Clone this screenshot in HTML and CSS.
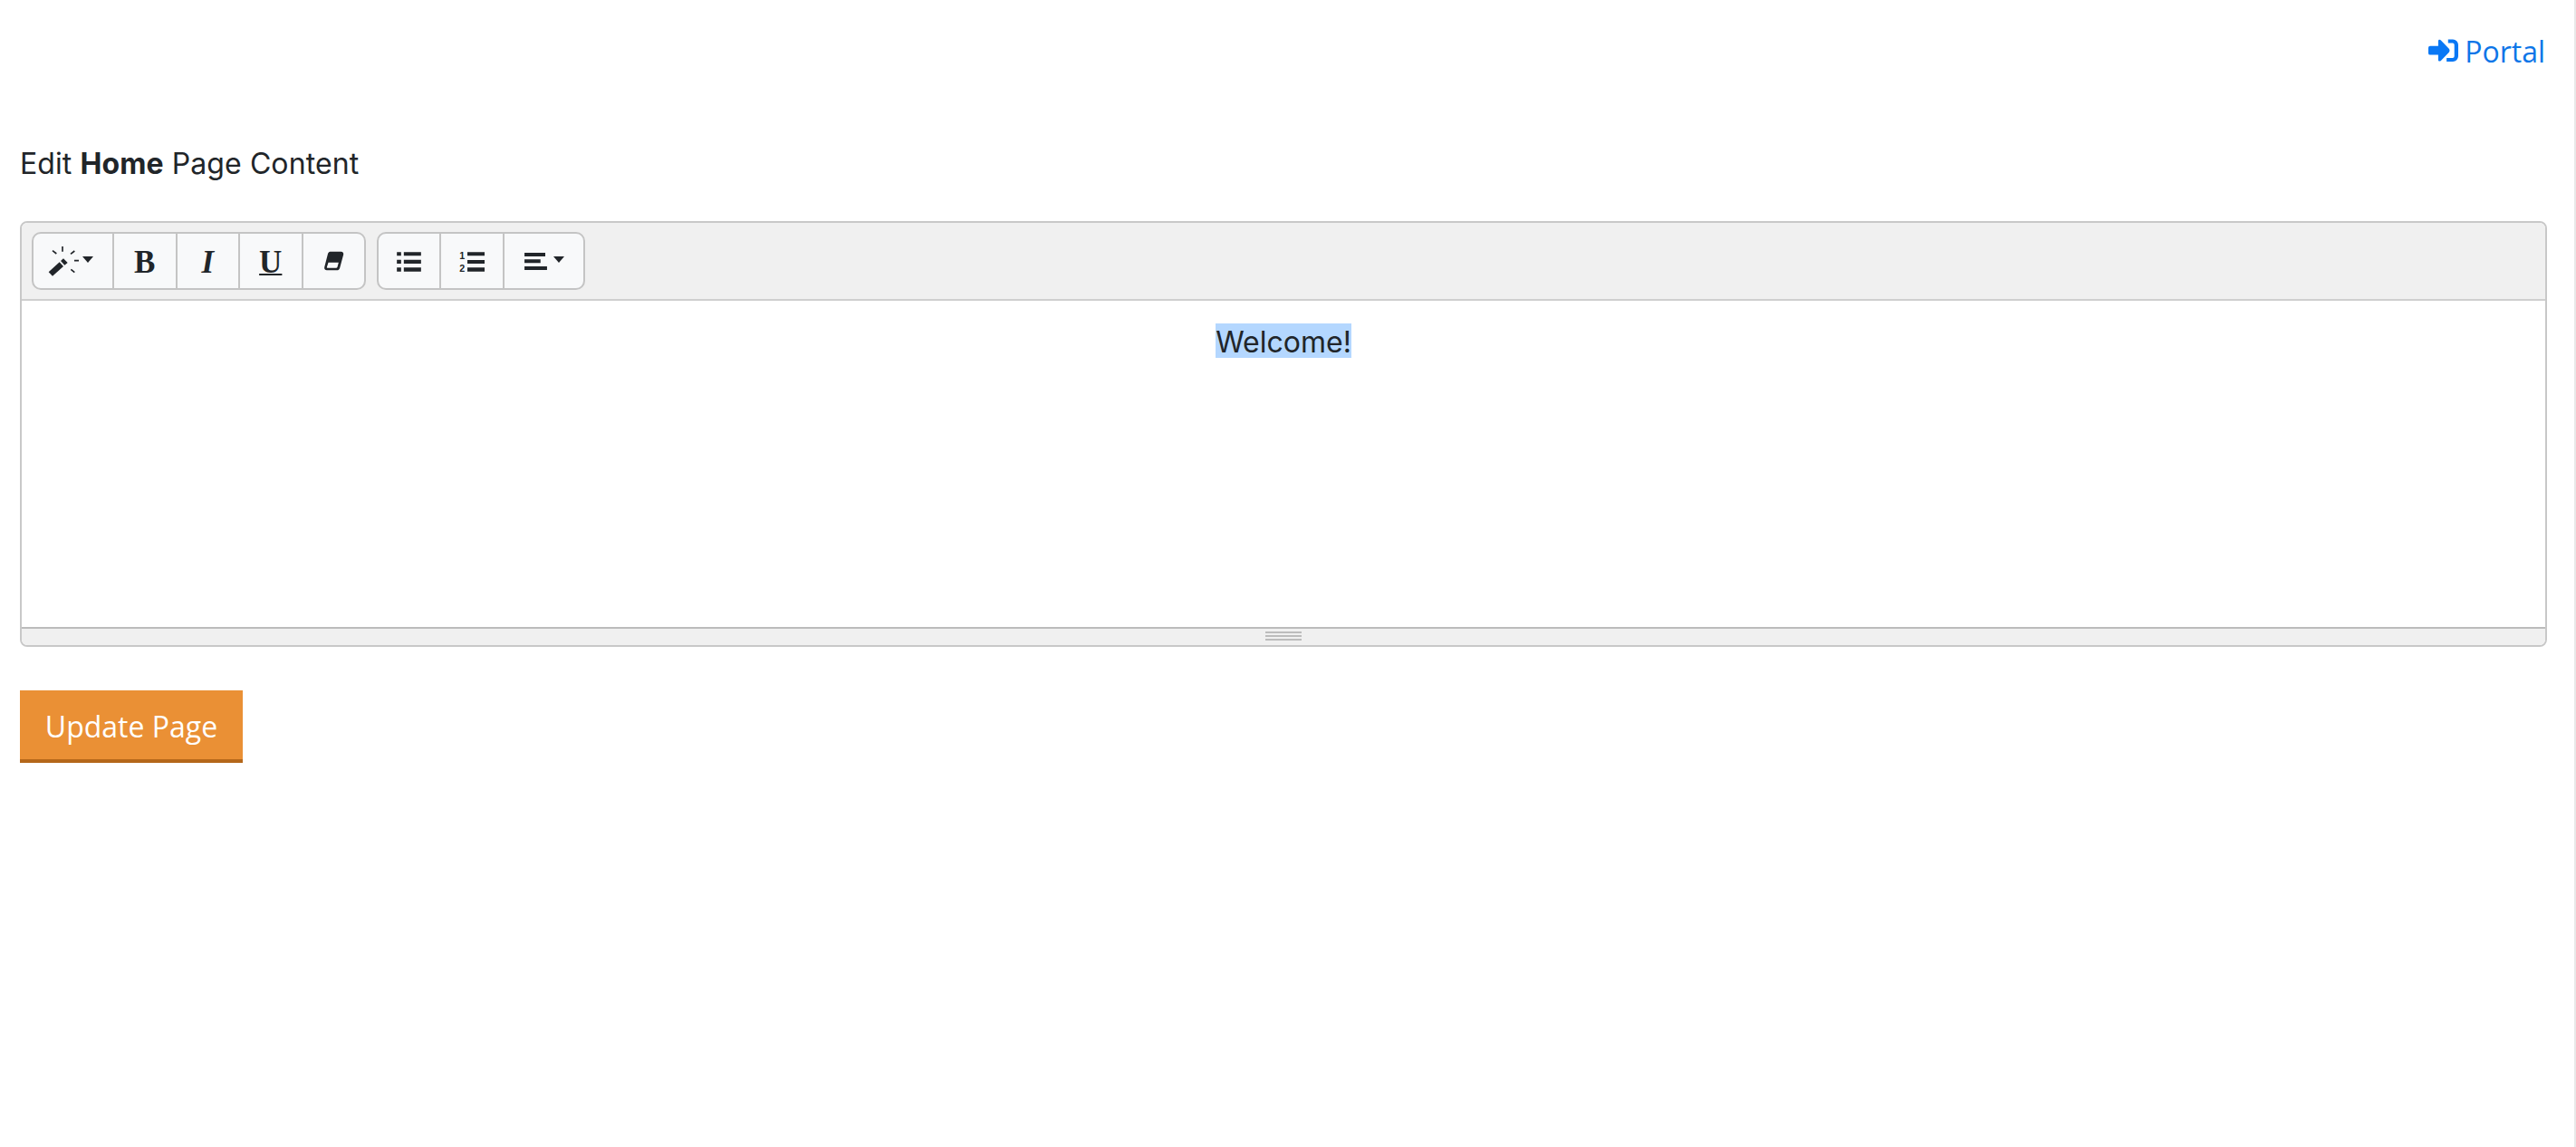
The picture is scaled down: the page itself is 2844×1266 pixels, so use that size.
FILE: index.html
```html
<!DOCTYPE html>
<html>
<head>
    <title>Edit Home Page</title>
    <link rel="stylesheet" href="styles.css">
</head>
<body>
    <div class="page">
        <div class="top-nav">
            <a href="#" class="portal-link">
                <svg class="portal-icon" viewBox="122 132 100 78">
                    <path d="M128 155h27v-16c0-5 5-7 9-3l27 28c3 3 3 9 0 12l-27 28c-4 4-9 2-9-3v-16h-27a6 6 0 0 1-6-6v-18a6 6 0 0 1 6-6z"/>
                    <path d="M188 133h16a18 18 0 0 1 18 18v38a18 18 0 0 1-18 18h-21v-12h20a6 6 0 0 0 6-6v-38a6 6 0 0 0-6-6h-15z"/>
                </svg>
                Portal
            </a>
        </div>
        <p class="page-title">Edit <b>Home</b> Page Content</p>
        <div class="editor">
            <div class="toolbar">
                <div class="btn-group">
                    <button class="tool tool-style">
                        <svg class="icon-wand" viewBox="160 125 105 105">
                            <path d="M162 213 198 180 211 194 175 226z"/>
                            <path d="M202 176 211 168 225 182 215 190z"/>
                            <path d="M208 128v17M175 142l13 10M248 143l-13 10M247 175h15M236 204l12 10" fill="none" stroke="#212529" stroke-width="5"/>
                        </svg>
                        <span class="caret"></span>
                    </button>
                    <button class="tool tool-bold">B</button>
                    <button class="tool tool-italic">I</button>
                    <button class="tool tool-under">U</button>
                    <button class="tool tool-clear">
                        <svg class="icon-eraser" viewBox="1072 148 68 66">
                            <path fill-rule="evenodd" d="M1094 150h36c6 0 9 5 8 10l-12 44c-1 5-5 8-10 8h-33c-6 0-9-5-8-10l11-43c1-5 4-9 8-9zM1088 186l-5 16c0 1 0 2 2 2h29c2 0 3-1 4-3l4-15z"/>
                        </svg>
                    </button>
                </div>
                <div class="btn-group">
                    <button class="tool tool-bullets">
                        <svg class="icon-list" viewBox="172 147 80 66">
                            <path d="M172 148h14v12h-14zM195 148h57v12h-57zM172 173h14v13h-14zM195 173h57v13h-57zM172 199h14v13h-14zM195 199h57v13h-57z"/>
                        </svg>
                    </button>
                    <button class="tool tool-numbers">
                        <svg class="icon-list" viewBox="378 147 84 66">
                            <path d="M405 148h57v12h-57zM405 174h57v12h-57zM405 199h57v13h-57z"/>
                            <text class="icon-num" x="379" y="172">1</text>
                            <text class="icon-num" x="379" y="212">2</text>
                        </svg>
                    </button>
                    <button class="tool tool-align">
                        <svg class="icon-align" viewBox="591 151 76 58">
                            <path d="M591 151h70v12h-70zM591 173h54v12h-54zM591 197h76v12h-76z"/>
                        </svg>
                        <span class="caret"></span>
                    </button>
                </div>
            </div>
            <div class="editor-body">
                <p class="welcome"><span class="selected">Welcome!</span></p>
            </div>
            <div class="statusbar">
                <div class="grip"><span></span><span></span><span></span></div>
            </div>
        </div>
        <a href="#" class="update-button">Update Page</a>
    </div>
</body>
</html>
```

FILE: styles.css
```css
body {
    margin: 0;
    background-color: #fff;
    color: #212529;
    font-family: Inter, "Liberation Sans", sans-serif;
}
.page {
    height: 1266px;
    box-sizing: border-box;
    padding: 0 30px 0 22px;
    border-right: 2px solid #e8e8e8;
}
.top-nav {
    display: flex;
    justify-content: flex-end;
    padding-top: 34px;
    height: 157px;
    box-sizing: border-box;
}
.portal-link {
    display: flex;
    align-items: center;
    gap: 7px;
    height: 44px;
    margin-right: 2px;
    font-family: "Open Sans", sans-serif;
    font-size: 32px;
    color: #0d76e8;
    text-decoration: none;
}
.portal-icon {
    width: 33px;
    height: 26px;
    fill: #0a78f5;
}
.page-title {
    margin: 0;
    height: 87px;
    font-size: 32px;
    line-height: 48px;
    letter-spacing: 0.09px;
}
.editor {
    border: 2px solid #c8c8c8;
    border-radius: 8px;
    overflow: hidden;
}
.toolbar {
    display: flex;
    gap: 12px;
    height: 86px;
    box-sizing: border-box;
    padding: 10px 0 0 11px;
    background-color: #f0f0f0;
    border-bottom: 2px solid #cfcfcf;
}
.btn-group {
    display: flex;
    height: 64px;
    box-sizing: border-box;
    border: 2px solid #c4c4c4;
    border-radius: 10px;
    overflow: hidden;
    background-color: #f8f9fa;
}
.tool {
    display: flex;
    align-items: center;
    justify-content: center;
    width: 69.5px;
    padding: 0;
    border: none;
    border-right: 2px solid #c4c4c4;
    background: none;
    color: #212529;
    font-size: 35px;
    line-height: 1;
}
.tool:last-child {
    border-right: none;
}
.tool-style {
    width: 89px;
    gap: 3px;
    padding-right: 5px;
}
.tool-clear {
    width: 67.5px;
}
.tool-numbers {
    width: 70px;
    padding-top: 1px;
}
.tool-bullets {
    width: 69px;
    padding-top: 1px;
}
.tool-align {
    width: 87px;
    gap: 7px;
}
.tool-bold, .tool-italic, .tool-under {
    padding-top: 2px;
    font-family: "Liberation Serif", serif;
    font-weight: bold;
}
.tool-italic {
    font-style: italic;
}
.tool-under {
    text-decoration: underline;
    text-decoration-thickness: 2px;
    text-underline-offset: 1px;
}
.caret {
    width: 0;
    height: 0;
    margin-bottom: 3px;
    border-left: 6.500px solid transparent;
    border-right: 6.500px solid transparent;
    border-top: 7px solid #212529;
}
.icon-wand {
    width: 35px;
    height: 35px;
    fill: #212529;
}
.icon-eraser {
    width: 23px;
    height: 22px;
    fill: #212529;
}
.icon-list {
    width: 27px;
    height: 22px;
    fill: #212529;
    overflow: visible;
}
.tool-numbers .icon-list {
    width: 28px;
}
.icon-num {
    font-family: "Liberation Sans", sans-serif;
    font-size: 32px;
    font-weight: bold;
}
.icon-align {
    width: 25px;
    height: 19px;
    fill: #212529;
}
.editor-body {
    height: 362px;
    box-sizing: border-box;
    padding-top: 25px;
    background-color: #fff;
    border-bottom: 2px solid #bcbcbc;
}
.welcome {
    margin: 0;
    text-align: center;
    font-family: Inter, "Liberation Sans", sans-serif;
    font-size: 32px;
    line-height: 35px;
}
.selected {
    display: inline-block;
    padding-top: 3px;
    background-color: #b4d7ff;
}
.statusbar {
    display: flex;
    justify-content: center;
    height: 18px;
    background-color: #f0f0f0;
}
.grip {
    display: flex;
    flex-direction: column;
    gap: 2px;
    padding-top: 3px;
}
.grip span {
    display: block;
    width: 40px;
    height: 2px;
    background-color: #bcbcbc;
}
.update-button {
    display: block;
    width: 246px;
    height: 80px;
    box-sizing: border-box;
    margin-top: 48px;
    border-bottom: 4px solid #b4671a;
    background-color: #ea9035;
    color: #fff;
    text-align: center;
    text-decoration: none;
    font-family: "Open Sans", sans-serif;
    font-size: 32px;
    line-height: 80px;
}
```
